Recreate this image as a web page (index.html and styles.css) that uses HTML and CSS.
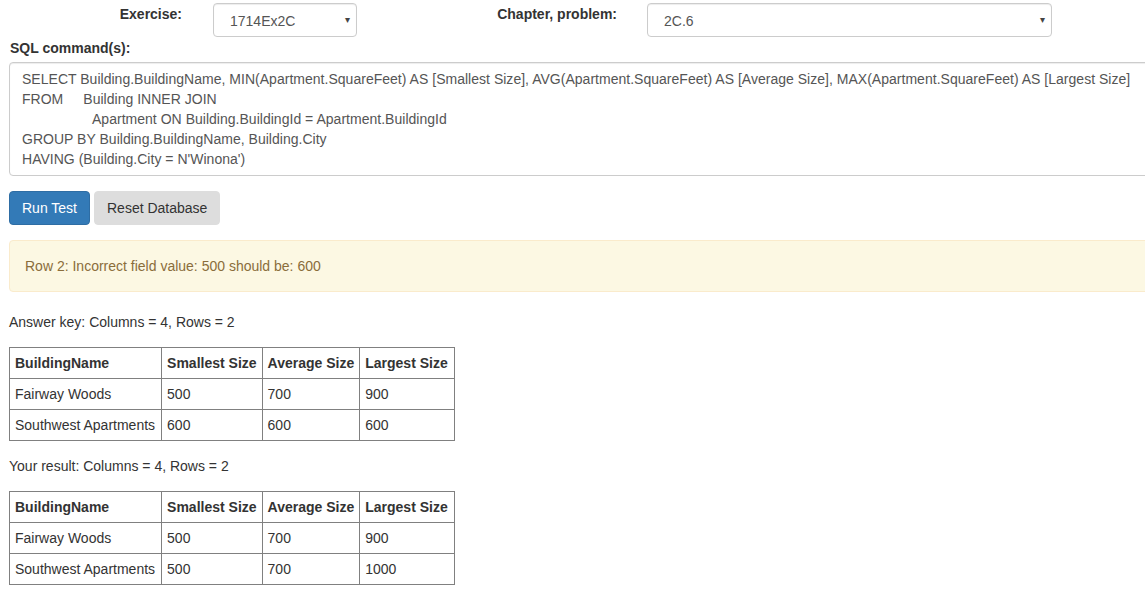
FILE: index.html
```html
<!DOCTYPE html>
<html>
<head>
<meta charset="utf-8">
<link rel="stylesheet" href="styles.css">
</head>
<body>
<div class="page">
  <div class="form-row">
    <div class="label label-ex">Exercise:</div>
    <div class="select select-ex"><span class="select-val">1714Ex2C</span><span class="caret">&#9662;</span></div>
    <div class="label label-ch">Chapter, problem:</div>
    <div class="select select-ch"><span class="select-val">2C.6</span><span class="caret">&#9662;</span></div>
  </div>
  <div class="sql-label">SQL command(s):</div>
  <div class="sql-box"><div class="sql-line">SELECT Building.BuildingName, MIN(Apartment.SquareFeet) AS [Smallest Size], AVG(Apartment.SquareFeet) AS [Average Size], MAX(Apartment.SquareFeet) AS [Largest Size]</div><div class="sql-line">FROM<span class="ind1">Building INNER JOIN</span></div><div class="sql-line ind2">Apartment ON Building.BuildingId = Apartment.BuildingId</div><div class="sql-line">GROUP BY Building.BuildingName, Building.City</div><div class="sql-line">HAVING (Building.City = N'Winona')</div></div>
  <div class="buttons">
    <button class="btn btn-primary">Run Test</button>
    <button class="btn btn-default">Reset Database</button>
  </div>
  <div class="alert">Row 2: Incorrect field value: 500 should be: 600</div>
  <p class="caption">Answer key: Columns = 4, Rows = 2</p>
  <table class="result">
    <tr><th class="c1">BuildingName</th><th>Smallest Size</th><th>Average Size</th><th class="c4">Largest Size</th></tr>
    <tr><td class="c1">Fairway Woods</td><td>500</td><td>700</td><td>900</td></tr>
    <tr><td class="c1">Southwest Apartments</td><td>600</td><td>600</td><td>600</td></tr>
  </table>
  <p class="caption">Your result: Columns = 4, Rows = 2</p>
  <table class="result">
    <tr><th class="c1">BuildingName</th><th>Smallest Size</th><th>Average Size</th><th class="c4">Largest Size</th></tr>
    <tr><td class="c1">Fairway Woods</td><td>500</td><td>700</td><td>900</td></tr>
    <tr><td class="c1">Southwest Apartments</td><td>500</td><td>700</td><td>1000</td></tr>
  </table>
</div>
</body>
</html>
```

FILE: styles.css
```css
html, body {
  margin: 0;
  padding: 0;
  background: #fff;
  overflow: hidden;
}
body {
  font-family: "Liberation Sans", Arial, sans-serif;
  font-size: 14px;
  line-height: 20px;
  color: #333;
}
.page {
  padding-left: 9px;
  width: 1160px;
}
.form-row {
  display: flex;
  align-items: flex-start;
  padding-top: 3px;
  margin-left: -9px;
}
.label {
  font-weight: bold;
  text-align: right;
  padding-top: 1px;
}
.label-ex { width: 182px; margin-right: 31px; }
.label-ch { width: 260px; margin-right: 30px; }
.select {
  box-sizing: border-box;
  height: 34px;
  border: 1px solid #ccc;
  border-radius: 4px;
  display: flex;
  align-items: center;
  justify-content: space-between;
  padding: 0 6px 0 16px;
  color: #555;
  box-shadow: inset 0 1px 1px rgba(0,0,0,.075);
}
.select-ex { width: 144px; }
.select-ch { width: 405px; }
.select-val { padding-top: 2px; }
.caret {
  font-size: 10px;
  color: #444;
}
.sql-label {
  font-weight: bold;
  margin-top: 1px;
  padding-left: 1px;
  line-height: 20px;
}
.sql-box {
  box-sizing: border-box;
  margin-top: 4px;
  height: 114px;
  border: 1px solid #ccc;
  border-radius: 4px;
  padding: 6px 12px;
  color: #555;
  line-height: 20px;
  box-shadow: inset 0 1px 1px rgba(0,0,0,.075);
}
.sql-line { white-space: nowrap; letter-spacing: 0.02px; }
.ind1 { margin-left: 20px; }
.ind2 { padding-left: 70px; }
.buttons {
  margin-top: 15px;
  display: flex;
  gap: 4px;
}
.btn {
  font-family: inherit;
  font-size: 14px;
  line-height: 20px;
  height: 34px;
  padding: 6px 12px;
  border-radius: 4px;
  border: 1px solid transparent;
  cursor: pointer;
}
.btn-primary {
  background: #337ab7;
  border-color: #2e6da4;
  color: #fff;
}
.btn-default {
  background: #dddddd;
  border-color: #dddddd;
  color: #333;
}
.alert {
  margin-top: 15px;
  padding: 15px;
  background: #fcf8e3;
  border: 1px solid #faebcc;
  border-radius: 4px;
  color: #8a6d3b;
}
.caption {
  margin: 20px 0 15px 0;
}
.result + .caption {
  margin-top: 15px;
}
.result {
  border-collapse: collapse;
  border: 1px solid #808080;
}
.result th, .result td {
  border: 1px solid #808080;
  padding: 5px;
  text-align: left;
  line-height: 20px;
  white-space: nowrap;
}
.result th { font-weight: bold; }
.result .c1 { padding-right: 6px; }
.result th.c4 { padding-right: 6px; }
```
